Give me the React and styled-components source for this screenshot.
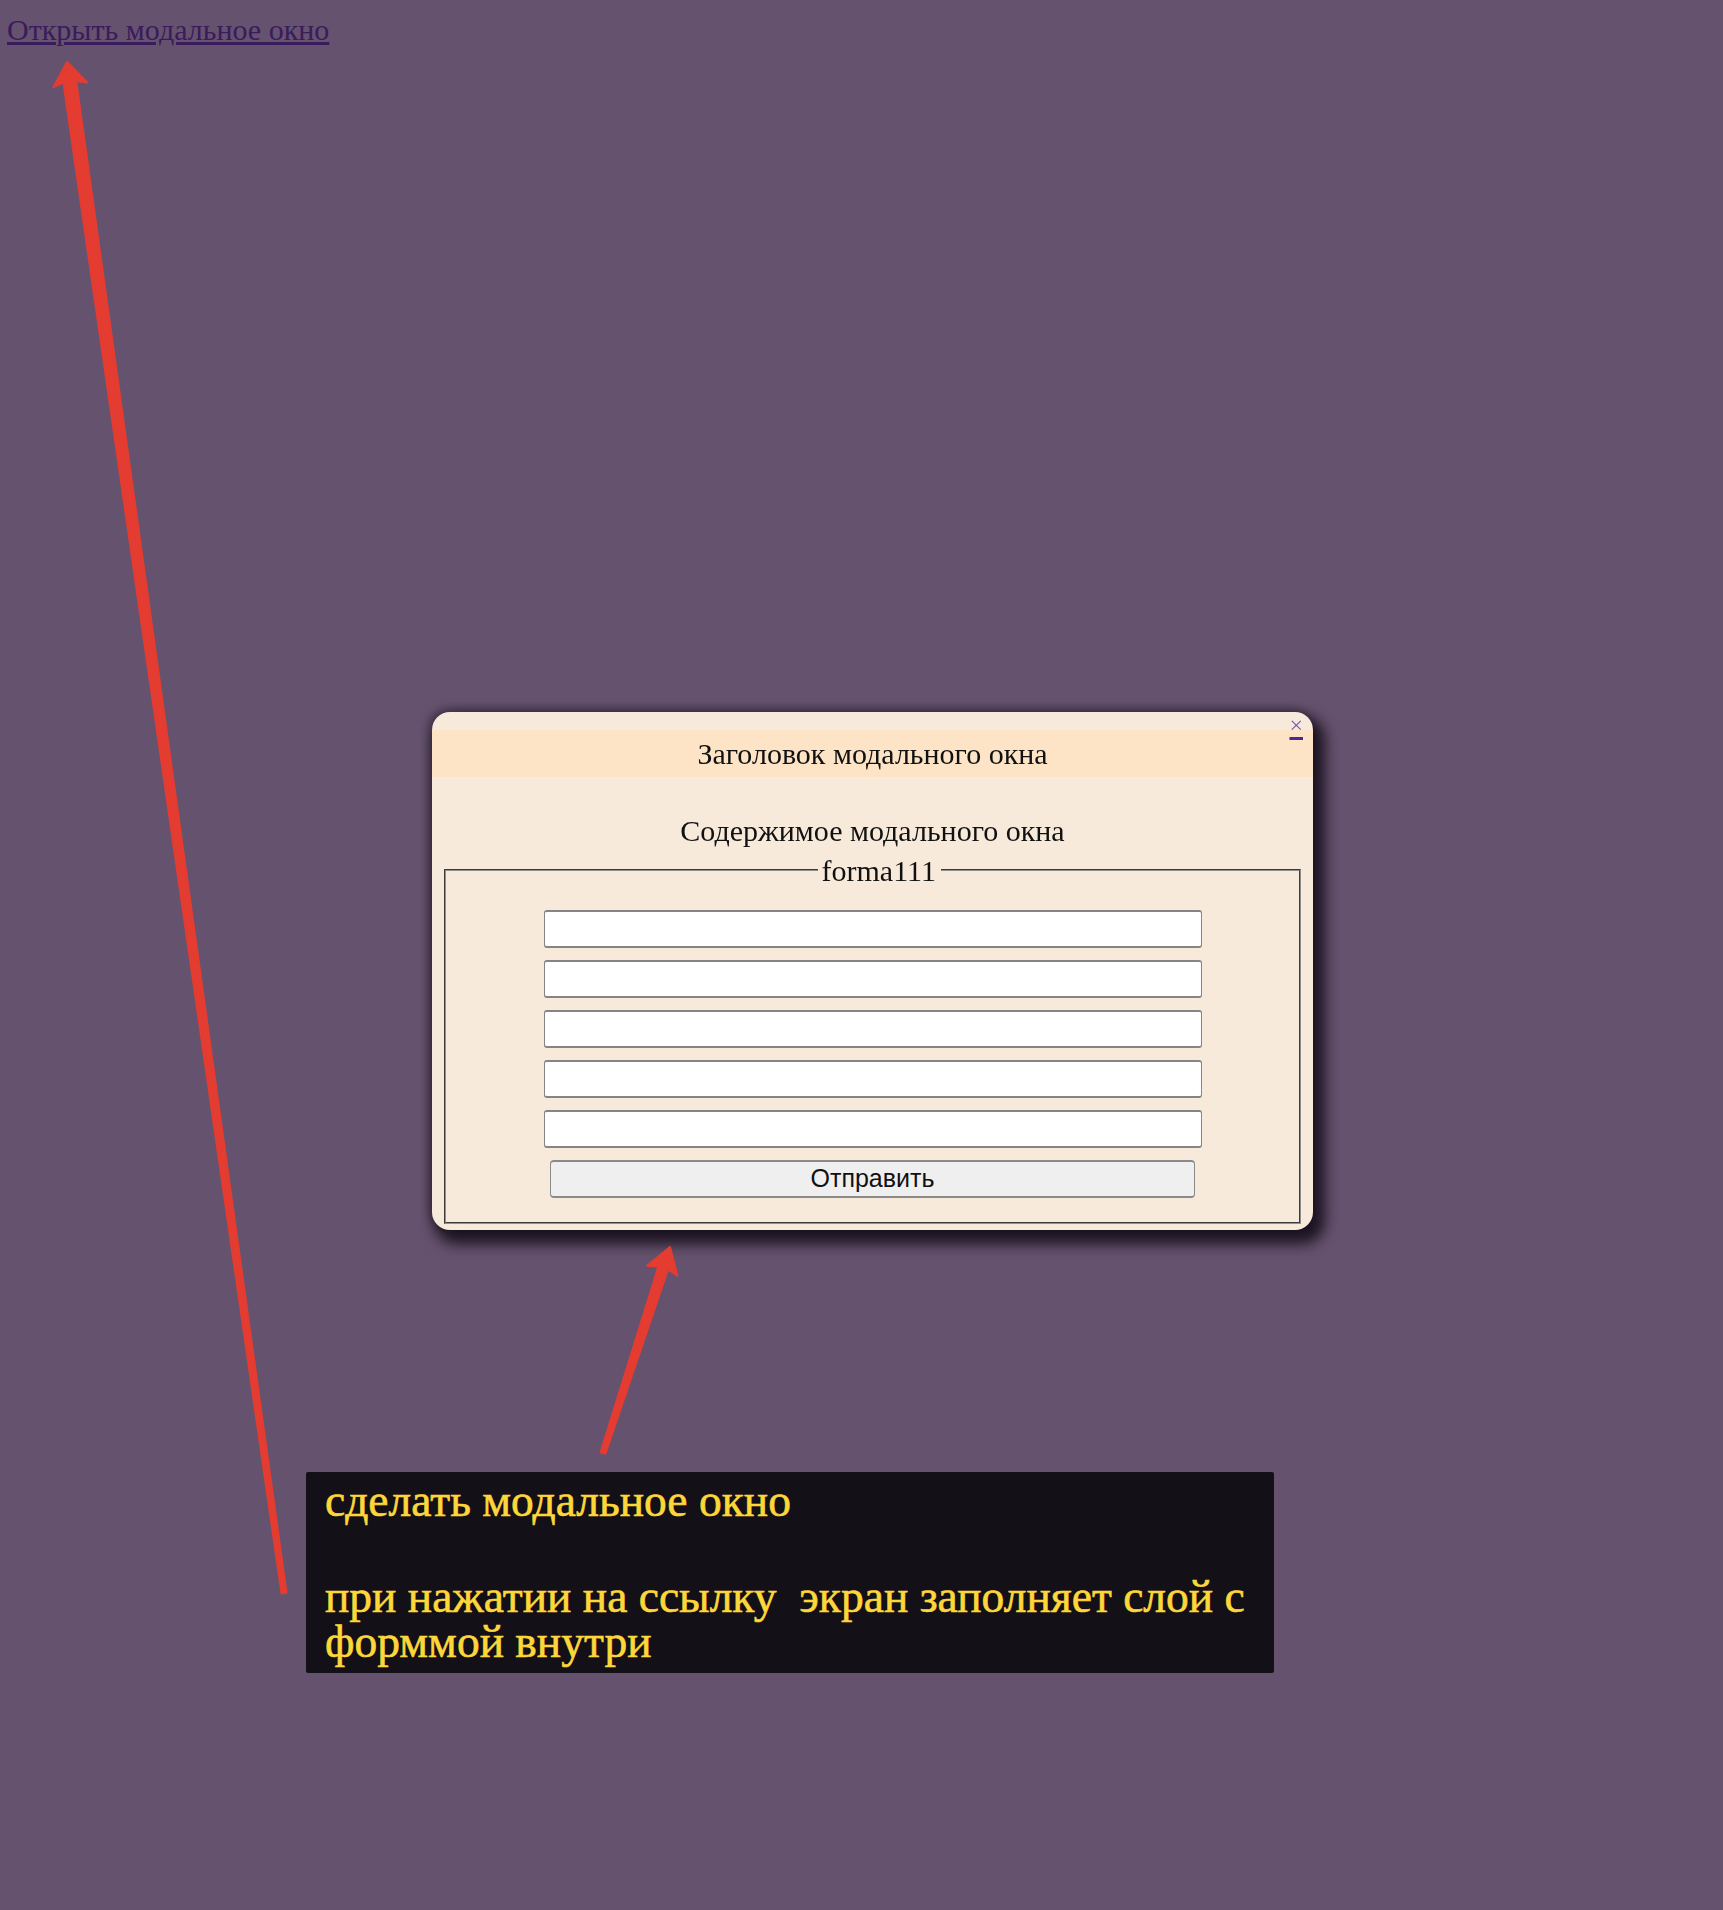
import React from "react";
import styled, { createGlobalStyle } from "styled-components";

const GlobalStyle = createGlobalStyle`
  html, body {
    margin: 0;
    padding: 0;
  }
  body {
    background: #65526e;
    font-family: "Liberation Serif", "Times New Roman", serif;
    color: #111;
  }
`;

const Page = styled.div`
  position: relative;
  min-height: 1910px;
  padding: 13px 0 0 7px;
  box-sizing: border-box;
`;

const OpenLink = styled.a`
  font-size: 30px;
  line-height: 33px;
  color: #3a1b5c;
  text-decoration: underline;
`;

const Overlay = styled.div`
  position: fixed;
  inset: 0;
  display: flex;
  align-items: center;
  justify-content: center;
  padding: 31px 0 0 22px;
`;

const Modal = styled.div`
  position: relative;
  width: 881px;
  box-sizing: border-box;
  padding: 18px 0 6px;
  background: #f8eadb;
  border-radius: 18px;
  box-shadow: 7px 9px 14px 5px rgba(15, 8, 20, 0.85), -3px -3px 10px rgba(15, 8, 20, 0.35);
`;

const Close = styled.a`
  position: absolute;
  top: 0;
  right: 10px;
  font-size: 24px;
  line-height: 26px;
  color: #7a55b5;
  text-decoration: underline;
  text-decoration-color: #4a2a90;
  text-decoration-thickness: 3px;
  text-underline-offset: 4px;
`;

const Header = styled.div`
  height: 47px;
  line-height: 47px;
  background: #fde4c6;
  text-align: center;
  font-size: 30px;
`;

const Body = styled.div`
  padding: 0 12px;
`;

const Lead = styled.p`
  margin: 37px 0 0;
  font-size: 30px;
  line-height: 33px;
  text-align: center;
`;

const Fieldset = styled.fieldset`
  margin: 7px 0 0;
  padding: 23px 0 24px;
  border: 2px groove #8f8f8f;
  min-width: 0;
`;

const Legend = styled.legend`
  margin: 0 auto 0 calc(50% - 55px);
  padding: 0 5px 0 4px;
  font-size: 30px;
  line-height: 33px;
`;

const Form = styled.form`
  display: flex;
  flex-direction: column;
  align-items: center;
  gap: 12px;
`;

const Input = styled.input`
  width: 658px;
  height: 38px;
  box-sizing: border-box;
  background: #fff;
  border: solid #858585;
  border-width: 2px 1px;
  border-radius: 3px;
  font-size: 20px;
  padding: 0 6px;
`;

const Submit = styled.button`
  width: 645px;
  height: 38px;
  box-sizing: border-box;
  background: #efefef;
  border: solid #8a8a8a;
  border-width: 2px 1px;
  border-radius: 4px;
  font-family: "Liberation Sans", Arial, sans-serif;
  font-size: 25px;
  color: #111;
`;

const Note = styled.div`
  position: absolute;
  left: 306px;
  top: 1472px;
  width: 968px;
  height: 201px;
  box-sizing: border-box;
  padding: 6px 19px 8px;
  background: #141017;
  border-radius: 2px;
  color: #fdd73a;
  font-size: 45.5px;
  line-height: 45px;
  white-space: pre;
  -webkit-text-stroke: 0.6px #fdd73a;
`;

const NoteLine = styled.p`
  margin: 0 0 ${(p) => p.$gap || 0}px;
`;

const Arrows = styled.svg`
  position: absolute;
  left: 0;
  top: 0;
  pointer-events: none;
`;

function arrow(tail, tip, headLen, headHalf, neckHalf, tailHalf) {
  const dx = tip[0] - tail[0];
  const dy = tip[1] - tail[1];
  const len = Math.hypot(dx, dy);
  const ux = dx / len;
  const uy = dy / len;
  const nx = -uy;
  const ny = ux;
  const bx = tip[0] - ux * headLen;
  const by = tip[1] - uy * headLen;
  const pts = [
    [tail[0] + nx * tailHalf, tail[1] + ny * tailHalf],
    [bx + nx * neckHalf, by + ny * neckHalf],
    [bx + nx * headHalf - ux * 3, by + ny * headHalf - uy * 3],
    tip,
    [bx - nx * headHalf - ux * 3, by - ny * headHalf - uy * 3],
    [bx - nx * neckHalf, by - ny * neckHalf],
    [tail[0] - nx * tailHalf, tail[1] - ny * tailHalf],
  ];
  return pts.map((p) => p[0].toFixed(1) + "," + p[1].toFixed(1)).join(" ");
}

export default function App() {
  return (
    <>
      <GlobalStyle />
      <Page>
        <OpenLink href="#">Открыть модальное окно</OpenLink>

        <Overlay>
          <Modal>
            <Close href="#">×</Close>
            <Header>Заголовок модального окна</Header>
            <Body>
              <Lead>Содержимое модального окна</Lead>
              <Fieldset>
                <Legend>forma111</Legend>
                <Form onSubmit={(e) => e.preventDefault()}>
                  <Input type="text" />
                  <Input type="text" />
                  <Input type="text" />
                  <Input type="text" />
                  <Input type="text" />
                  <Submit type="submit">Отправить</Submit>
                </Form>
              </Fieldset>
            </Body>
          </Modal>
        </Overlay>

        <Note>
          <NoteLine $gap={51}>сделать модальное окно</NoteLine>
          <NoteLine>при нажатии на ссылку  экран заполняет слой с</NoteLine>
          <NoteLine>форммой внутри</NoteLine>
        </Note>

        <Arrows width="1723" height="1910" viewBox="0 0 1723 1910">
          <polygon
            points={arrow([284, 1593], [67, 62], 20, 17, 6.5, 2.5)}
            fill="#e43c30"
            stroke="#e43c30"
            strokeWidth="2"
            strokeLinejoin="round"
          />
          <polygon
            points={arrow([603, 1453], [670, 1247], 22, 16, 5, 2.5)}
            fill="#e43c30"
            stroke="#e43c30"
            strokeWidth="2"
            strokeLinejoin="round"
          />
        </Arrows>
      </Page>
    </>
  );
}
